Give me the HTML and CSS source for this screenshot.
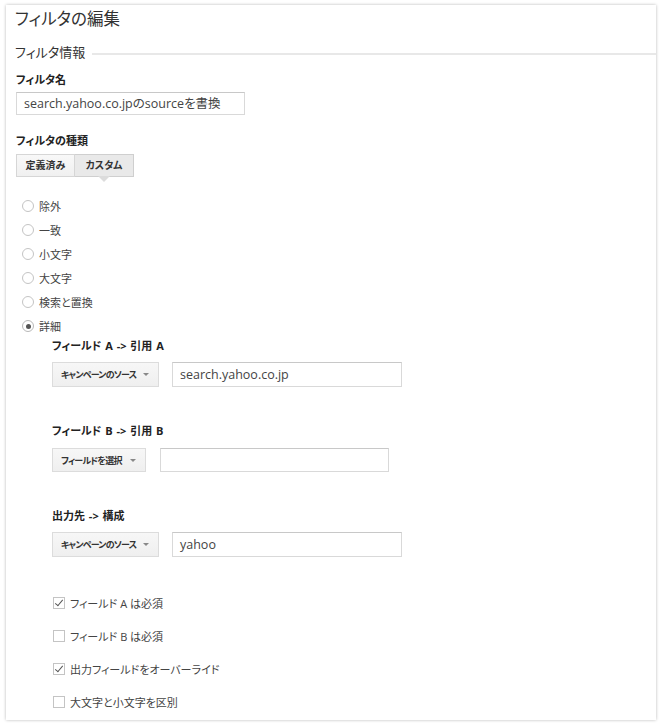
FILE: index.html
```html
<!DOCTYPE html>
<html lang="ja">
<head>
<meta charset="utf-8">
<title>フィルタの編集</title>
<link rel="stylesheet" href="styles.css">
</head>
<body>
<div class="card">
  <h1 class="title">フィルタの編集</h1>
  <div class="section-title"><span>フィルタ情報</span></div>

  <div class="label label-name">フィルタ名</div>
  <div class="input input-name">search.yahoo.co.jpのsourceを書換</div>

  <div class="label label-type">フィルタの種類</div>
  <div class="tabs">
    <div class="tab">定義済み</div>
    <div class="tab tab-active">カスタム</div>
  </div>

  <div class="radios">
    <div class="radio-row"><span class="radio"></span><span class="opt">除外</span></div>
    <div class="radio-row"><span class="radio"></span><span class="opt">一致</span></div>
    <div class="radio-row"><span class="radio"></span><span class="opt">小文字</span></div>
    <div class="radio-row"><span class="radio"></span><span class="opt">大文字</span></div>
    <div class="radio-row"><span class="radio"></span><span class="opt">検索と置換</span></div>
    <div class="radio-row"><span class="radio radio-on"></span><span class="opt">詳細</span></div>
  </div>

  <div class="advanced">
    <div class="field-head">フィールド A -&gt; 引用 A</div>
    <div class="field-row row-a">
      <div class="select select-wide"><span class="sel-text">キャンペーンのソース</span><span class="caret"></span></div>
      <div class="input input-field">search.yahoo.co.jp</div>
    </div>

    <div class="field-head head-gap">フィールド B -&gt; 引用 B</div>
    <div class="field-row row-b">
      <div class="select select-narrow"><span class="sel-text">フィールドを選択</span><span class="caret"></span></div>
      <div class="input input-field"></div>
    </div>

    <div class="field-head head-gap">出力先 -&gt; 構成</div>
    <div class="field-row row-a">
      <div class="select select-wide"><span class="sel-text">キャンペーンのソース</span><span class="caret"></span></div>
      <div class="input input-field">yahoo</div>
    </div>

    <div class="checks">
      <div class="check-row"><span class="check check-on"></span><span class="opt">フィールド A は必須</span></div>
      <div class="check-row"><span class="check"></span><span class="opt">フィールド B は必須</span></div>
      <div class="check-row"><span class="check check-on"></span><span class="opt">出力フィールドをオーバーライド</span></div>
      <div class="check-row"><span class="check"></span><span class="opt">大文字と小文字を区別</span></div>
    </div>
  </div>
</div>
</body>
</html>
```

FILE: styles.css
```css
html, body {
  margin: 0;
  padding: 0;
  background: #ffffff;
}
body {
  font-family: "Open Sans", "Noto Sans CJK JP", sans-serif;
  font-feature-settings: "palt";
  color: #333;
  padding: 5px 6px 6px 6px;
}
.card {
  width: 650px;
  height: 715px;
  box-sizing: border-box;
  background: #fff;
  box-shadow: 0 0 3px rgba(0, 0, 0, 0.28);
  padding: 0 0 0 10px;
  overflow: hidden;
}
.title {
  margin: 0 0 0 -1px;
  height: 28px;
  line-height: 28px;
  font-size: 16.5px;
  font-weight: normal;
  color: #333;
}
.section-title {
  margin-top: 9px;
  margin-left: -1px;
  height: 20px;
  line-height: 20px;
  font-size: 13px;
  color: #333;
  display: flex;
  align-items: center;
}
.section-title::after {
  content: "";
  flex: 1;
  height: 0;
  border-top: 2px solid #e8e8e8;
  margin-left: 7px;
  margin-top: 3px;
}
.label {
  height: 16px;
  line-height: 16px;
  font-size: 11px;
  font-weight: bold;
  color: #222;
}
.label-name { margin-top: 10px; }
.label-type { margin-top: 18px; }
.input {
  box-sizing: border-box;
  border: 1px solid #d9d9d9;
  border-top-color: #c8c8c8;
  background: #fff;
  font-size: 12.5px;
  color: #444;
  padding: 0 7px;
  white-space: nowrap;
}
.input-name {
  margin-top: 4px;
  width: 229px;
  height: 23px;
  line-height: 21px;
}
.tabs {
  margin-top: 5px;
  display: flex;
  height: 23px;
}
.tab {
  position: relative;
  box-sizing: border-box;
  width: 59px;
  height: 23px;
  line-height: 21px;
  text-align: center;
  font-size: 10px;
  font-weight: bold;
  color: #333;
  border: 1px solid #d6d6d6;
  background: linear-gradient(#f8f8f8, #f0f0f0);
}
.tab + .tab { border-left: none; }
.tab-active {
  background: #e9e9e9;
  border-color: #cfcfcf;
}
.tab-active::after {
  content: "";
  position: absolute;
  left: 50%;
  top: 100%;
  margin-left: -6px;
  border-left: 6px solid transparent;
  border-right: 6px solid transparent;
  border-top: 6px solid #dcdcdc;
}
.radios {
  margin-top: 17px;
}
.radio-row {
  height: 24px;
  display: flex;
  align-items: center;
}
.radio {
  box-sizing: border-box;
  width: 12px;
  height: 12px;
  margin-left: 6px;
  border-radius: 50%;
  border: 1px solid #c4c4c4;
  background: #fff;
  position: relative;
}
.radio-on { border-color: #b8b8b8; }
.radio-on::after {
  content: "";
  position: absolute;
  left: 2.5px;
  top: 2.5px;
  width: 5px;
  height: 5px;
  border-radius: 50%;
  background: #555;
}
.opt {
  margin-left: 5px;
  font-size: 11px;
  color: #444;
  white-space: nowrap;
}
.advanced {
  margin-left: 36px;
}
.field-head {
  height: 16px;
  line-height: 16px;
  font-size: 11px;
  font-weight: bold;
  color: #222;
  word-spacing: 1px;
}
.head-gap { margin-top: 36px; }
.field-row {
  display: flex;
  margin-top: 8px;
}
.row-a { height: 25px; }
.row-b { height: 24px; margin-top: 9px; }
.select {
  box-sizing: border-box;
  height: 100%;
  border: 1px solid #dcdcdc;
  background: linear-gradient(#f7f7f7, #efefef);
  font-size: 9px;
  font-weight: bold;
  color: #333;
  display: flex;
  align-items: center;
  padding-left: 8px;
  white-space: nowrap;
  flex-shrink: 0;
}
.sel-text { letter-spacing: -0.8px; }
.select-wide { width: 107px; margin-right: 13px; }
.select-narrow { width: 94px; margin-right: 14px; }
.caret {
  margin-left: auto;
  margin-right: 9px;
  flex-shrink: 0;
  width: 0;
  height: 0;
  border-left: 3px solid transparent;
  border-right: 3px solid transparent;
  border-top: 3px solid #888;
}
.input-field {
  width: 230px;
  height: 100%;
  display: flex;
  align-items: center;
}
.row-b .input-field { width: 229px; }
.checks {
  margin-top: 29px;
}
.check-row {
  height: 33px;
  display: flex;
  align-items: center;
}
.check {
  box-sizing: border-box;
  width: 12px;
  height: 12px;
  margin-left: 1px;
  border: 1px solid #c4c4c4;
  background: #fff;
  position: relative;
}
.check-on::after {
  content: "";
  position: absolute;
  left: 3px;
  top: 0px;
  width: 3px;
  height: 7px;
  border-right: 1.5px solid #555;
  border-bottom: 1.5px solid #555;
  transform: rotate(40deg);
}
.check + .opt { margin-left: 5px; }
```
